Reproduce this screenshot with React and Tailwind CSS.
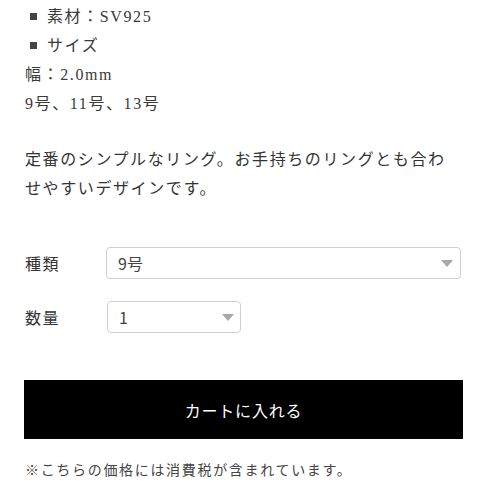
export default function App() {
  const font = { fontFamily: '"Noto Sans CJK JP", "Noto Sans", sans-serif' };
  const serif = { fontFamily: '"Liberation Serif", "Noto Sans CJK JP", serif' };

  return (
    <div className="w-[486px] h-[486px] bg-white overflow-hidden text-[#333]" style={font}>
      <div className="px-[25px] pt-[2px]">
        {/* Spec list */}
        <div className="text-[16px] leading-[29px] tracking-[0.1em] text-[#3a3a3a]" style={serif}>
          <div className="flex items-center pl-[5px]">
            <span className="w-[7px] h-[7px] bg-[#444] mr-[10px]"></span>
            素材：SV925
          </div>
          <div className="flex items-center pl-[5px]">
            <span className="w-[7px] h-[7px] bg-[#444] mr-[10px]"></span>
            サイズ
          </div>
          <div>幅：2.0mm</div>
          <div>9号、11号、13号</div>
        </div>

        {/* Description */}
        <p className="mt-[27px] text-[16px] leading-[29px] tracking-[0.1em]" style={serif}>
          定番のシンプルなリング。お手持ちのリングとも合わせやすいデザインです。
        </p>

        {/* Options */}
        <div className="mt-[44px] flex flex-col gap-[22px]">
          <div className="flex items-center">
            <span className="w-[81px] text-[16px] tracking-[0.1em]">種類</span>
            <div className="flex-1 h-[32px] border border-[#cfcfcf] rounded-[4px] flex items-center justify-between pl-[11px] pr-[7px] text-[16px] text-[#444]">
              <span>9号</span>
              <svg width="12" height="7" viewBox="0 0 12 7">
                <path d="M0 0h12L6 7z" fill="#a8a8a8" />
              </svg>
            </div>
          </div>
          <div className="flex items-center">
            <span className="w-[82px] text-[16px] tracking-[0.1em]">数量</span>
            <div className="w-[134px] h-[32px] border border-[#cfcfcf] rounded-[4px] flex items-center justify-between pl-[11px] pr-[6px] text-[16px] text-[#444]">
              <span>1</span>
              <svg width="12" height="7" viewBox="0 0 12 7">
                <path d="M0 0h12L6 7z" fill="#a8a8a8" />
              </svg>
            </div>
          </div>
        </div>

        {/* Cart button */}
        <button className="mt-[47px] -ml-[1px] w-[439px] h-[59px] bg-black text-white text-[16px] tracking-[0.05em] flex items-center justify-center">
          カートに入れる
        </button>

        {/* Note */}
        <p className="mt-[22px] text-[14px] leading-[20px] tracking-[0.12em] text-[#444]" style={serif}>
          ※こちらの価格には消費税が含まれています。
        </p>
      </div>
    </div>
  );
}
